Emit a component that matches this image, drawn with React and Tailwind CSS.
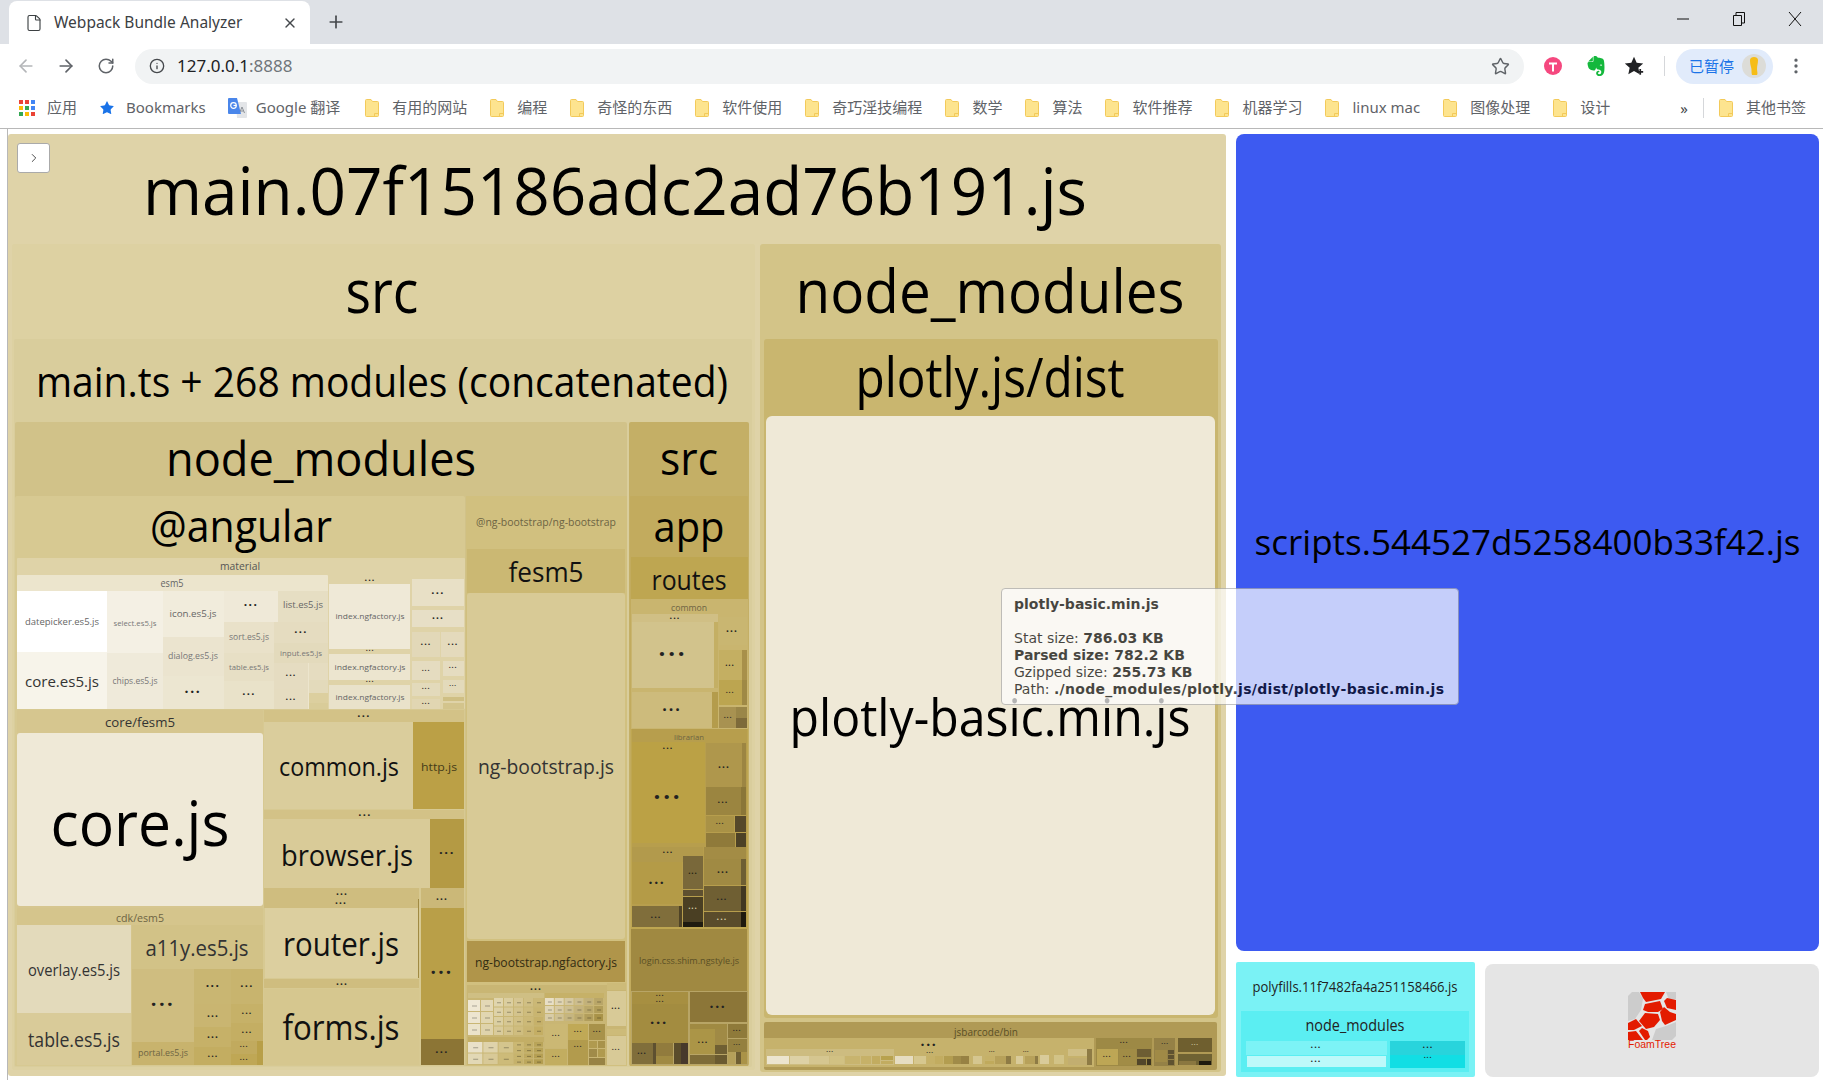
import { ArrowLeft, ArrowRight, RotateCw, Info, Star, Plus, X, File, EllipsisVertical, ChevronRight } from "lucide-react";
import { SiEvernote } from "react-icons/si";

// treemap cells in page pixels: x0, y0, x1, y1, fill, radius
const mainCells = [
  [8, 134, 1226, 1076, "#dfd3a8", 3],
  [12, 244, 755, 1070, "#ddd1a2", 2],
  [14, 339, 752, 1067, "#d9cd9c", 2],
  [15, 422, 627, 1066, "#d1c289", 2],
  [15, 496, 465, 1066, "#d7c992", 2],
  [629, 422, 749, 1066, "#c4af66", 2],
  [630, 496, 748, 1066, "#c2ab5e", 1],
  [631, 557, 748, 929, "#bea651", 0],
  [760, 244, 1221, 1072, "#d3c488", 3],
  [764, 339, 1218, 1018, "#c9b66f", 3],
  [766, 416, 1215, 1015, "#efe9d7", 6],

  // @angular/material
  [17, 558, 465, 709, "#dfd3a8", 1],
  [17, 575, 328, 709, "#ece5cd", 1],
  [17, 591, 107, 652, "#ffffff", 0],
  [17, 652, 107, 709, "#f7f4ea", 0],
  [107, 591, 163, 653, "#f4f0e4", 0],
  [107, 653, 163, 709, "#efeada", 0],
  [163, 591, 224, 637, "#f1ecdc", 0],
  [163, 637, 224, 676, "#ebe4cf", 0],
  [163, 676, 224, 709, "#ece6d1", 0],
  [224, 591, 278, 622, "#efe9d8", 0],
  [278, 591, 328, 622, "#e6dec3", 0],
  [224, 622, 274, 653, "#e9e1c9", 0],
  [224, 653, 274, 681, "#e7dfc5", 0],
  [224, 681, 274, 709, "#e9e2c9", 0],
  [274, 622, 328, 643, "#e5dcc0", 0],
  [274, 643, 328, 663, "#e3dabc", 0],
  [274, 663, 308, 689, "#e5dcc1", 0],
  [274, 689, 308, 709, "#e5dcc0", 0],
  [309, 663, 328, 680, "#e5dcc0", 0],
  [309, 680, 328, 693, "#e3dabb", 0],
  [309, 693, 328, 703, "#dccf9f", 0],
  [309, 703, 328, 709, "#d9cc99", 0],
  [329, 584, 410, 649, "#efe9d7", 0],
  [329, 654, 410, 680, "#ece5cf", 0],
  [329, 685, 410, 709, "#e9e2ca", 0],
  [412, 579, 464, 606, "#e8e0c6", 0],
  [412, 610, 464, 627, "#e7dfc6", 0],
  [412, 632, 440, 657, "#e2d8b8", 0],
  [441, 632, 464, 657, "#e4dabc", 0],
  [412, 661, 440, 680, "#e5dcc0", 0],
  [443, 661, 464, 676, "#e5dcc0", 0],
  [412, 683, 440, 696, "#e3dabb", 0],
  [443, 680, 464, 693, "#e3dabb", 0],
  [412, 699, 440, 709, "#e1d6b2", 0],
  [443, 697, 464, 701, "#cfbf84", 0],
  [443, 703, 464, 709, "#d3c48c", 0],

  // @angular/core and cdk
  [17, 710, 263, 908, "#d6c68f", 1],
  [17, 733, 263, 906, "#efe9d7", 3],
  [17, 908, 263, 1065, "#d5c58c", 1],
  [17, 925, 131, 1013, "#e3dabb", 0],
  [17, 1013, 131, 1065, "#d9cb99", 0],
  [132, 925, 263, 969, "#d2c287", 0],
  [132, 969, 194, 1042, "#cfbd80", 0],
  [132, 1042, 194, 1065, "#c8b36d", 0],
  [194, 969, 231, 1004, "#c9b672", 0],
  [194, 1004, 231, 1027, "#c9b571", 0],
  [194, 1027, 231, 1047, "#c6b168", 0],
  [194, 1047, 231, 1065, "#c3ad61", 0],
  [231, 969, 263, 1004, "#c8b46e", 0],
  [231, 1004, 263, 1023, "#c6b168", 0],
  [231, 1023, 263, 1041, "#c4ae63", 0],
  [231, 1041, 257, 1054, "#c1aa5e", 0],
  [231, 1054, 257, 1065, "#bfa755", 0],
  [257, 1041, 263, 1065, "#b89f48", 0],

  // common, browser, router, forms
  [264, 710, 464, 722, "#d3c287", 0],
  [264, 722, 413, 809, "#dacd9c", 0],
  [413, 722, 464, 809, "#bba046", 0],
  [264, 810, 464, 819, "#d3c287", 0],
  [264, 819, 430, 888, "#d9cb98", 0],
  [430, 819, 464, 888, "#b49a44", 0],
  [264, 888, 419, 908, "#cfbd7f", 0],
  [265, 908, 418, 978, "#dccf9f", 0],
  [418, 899, 419, 978, "#a08a43", 0],
  [264, 979, 419, 988, "#cfbd7f", 0],
  [264, 989, 419, 1065, "#d6c78f", 0],
  [421, 888, 464, 908, "#cbb878", 0],
  [421, 908, 464, 1039, "#b99f48", 0],
  [421, 1039, 464, 1065, "#8c7535", 0],

  // ng-bootstrap
  [466, 496, 627, 1066, "#d1c07f", 0],
  [467, 549, 625, 593, "#cbb873", 0],
  [467, 593, 625, 939, "#d8ca96", 3],
  [467, 941, 625, 982, "#b0954a", 0],
  [467, 985, 626, 1065, "#c9b674", 0],
  [468, 993, 544, 998, "#cfbf84", 0],
  [545, 993, 604, 998, "#c6b168", 0],
  [468, 1037, 544, 1042, "#c3ae66", 0],
  [545, 1024, 567, 1048, "#cbb874", 0],
  [545, 1049, 567, 1065, "#c2ad60", 0],
  [568, 1024, 588, 1040, "#c0a956", 0],
  [568, 1040, 588, 1055, "#b29b4d", 0],
  [568, 1055, 588, 1065, "#b29b4d", 0],
  [589, 1024, 605, 1040, "#a8924a", 0],
  [589, 1041, 597, 1048, "#b09a4f", 0],
  [598, 1041, 605, 1048, "#a8924a", 0],
  [589, 1049, 597, 1057, "#a08b49", 0],
  [598, 1049, 605, 1057, "#b09a4f", 0],
  [589, 1058, 605, 1065, "#988344", 0],
  [607, 983, 626, 990, "#cdbb79", 0],
  [607, 991, 626, 1026, "#d8ca97", 0],
  [607, 1029, 626, 1035, "#cdbb79", 0],
  [607, 1036, 626, 1065, "#d8ca97", 0],

  // app/routes
  [631, 599, 748, 729, "#c9b56f", 0],
  [632, 614, 718, 622, "#d0bf85", 0],
  [632, 622, 714, 688, "#d2c38c", 0],
  [714, 622, 718, 688, "#c4af64", 0],
  [632, 692, 712, 728, "#cdbb7c", 0],
  [712, 692, 718, 728, "#b49c4c", 0],
  [719, 617, 747, 645, "#c9b671", 0],
  [719, 650, 742, 680, "#c4af62", 0],
  [742, 650, 747, 680, "#a8904a", 0],
  [719, 680, 742, 705, "#bca550", 0],
  [742, 680, 747, 705, "#9f8945", 0],
  [719, 707, 736, 728, "#a89251", 0],
  [736, 707, 747, 718, "#9a8648", 0],
  [736, 718, 747, 728, "#7d6a3a", 0],
  [632, 729, 747, 927, "#b79e4d", 0],
  [632, 742, 705, 843, "#bba145", 0],
  [706, 743, 742, 787, "#af974c", 0],
  [742, 743, 746, 787, "#9c8542", 0],
  [706, 787, 741, 815, "#9b8540", 0],
  [741, 787, 746, 815, "#8a7638", 0],
  [706, 816, 734, 832, "#a99246", 0],
  [735, 816, 746, 832, "#55482a", 0],
  [706, 833, 735, 847, "#8f7a3a", 0],
  [736, 833, 746, 847, "#4c4126", 0],
  [632, 847, 703, 862, "#b29a4c", 0],
  [632, 862, 682, 904, "#b49b47", 0],
  [632, 906, 679, 927, "#806e3b", 0],
  [679, 906, 682, 927, "#4f4326", 0],
  [683, 856, 703, 889, "#79683a", 0],
  [683, 890, 703, 896, "#5e5030", 0],
  [683, 897, 703, 922, "#4a3f23", 0],
  [683, 922, 703, 927, "#1f1b10", 0],
  [704, 847, 746, 859, "#a38c45", 0],
  [704, 859, 741, 885, "#a08a43", 0],
  [741, 859, 746, 885, "#6e5e33", 0],
  [704, 886, 741, 911, "#6f5f33", 0],
  [741, 886, 746, 911, "#413722", 0],
  [704, 912, 741, 927, "#5a4c2b", 0],
  [741, 912, 746, 927, "#1f1a0e", 0],
  [631, 929, 747, 991, "#a08941", 0],
  [631, 991, 748, 1065, "#b8a566", 0],
  [632, 992, 688, 1004, "#a78f41", 0],
  [632, 1004, 688, 1043, "#a38c40", 0],
  [632, 1043, 653, 1064, "#806e3b", 0],
  [653, 1043, 656, 1064, "#5e5030", 0],
  [656, 1043, 673, 1056, "#917b3d", 0],
  [656, 1056, 673, 1064, "#a08a42", 0],
  [674, 1043, 681, 1064, "#5a4c2b", 0],
  [681, 1043, 688, 1064, "#47392b", 0],
  [690, 992, 747, 1022, "#8c7638", 0],
  [690, 1024, 727, 1029, "#a08a42", 0],
  [690, 1029, 715, 1054, "#ab9547", 0],
  [690, 1055, 715, 1064, "#7e6c38", 0],
  [715, 1029, 727, 1045, "#a08a45", 0],
  [715, 1045, 727, 1054, "#6f5f33", 0],
  [715, 1055, 727, 1064, "#6a5a30", 0],
  [728, 1024, 747, 1038, "#8f7a3a", 0],
  [728, 1039, 747, 1052, "#94803f", 0],
  [728, 1052, 735, 1064, "#b5a05a", 0],
  [736, 1052, 741, 1064, "#6f5f33", 0],
  [741, 1052, 747, 1064, "#aa9348", 0],

  // jsbarcode
  [764, 1022, 1217, 1070, "#b09a55", 2],
  [764, 1038, 1094, 1067, "#c6b26c", 0],
  [766, 1049, 894, 1065, "#cdbc80", 0],
  [767, 1056, 789, 1064, "#ece5cf", 0],
  [790, 1056, 809, 1064, "#ddd1a6", 0],
  [809, 1056, 829, 1064, "#d5c690", 0],
  [830, 1056, 844, 1064, "#d1c183", 0],
  [845, 1056, 860, 1064, "#c8b46e", 0],
  [861, 1056, 871, 1064, "#c6b168", 0],
  [872, 1056, 880, 1064, "#c2ac60", 0],
  [881, 1056, 893, 1060, "#b8a24e", 0],
  [881, 1061, 893, 1064, "#c2ac60", 0],
  [895, 1056, 913, 1064, "#e6ddc2", 0],
  [914, 1056, 926, 1064, "#d6c78f", 0],
  [927, 1056, 935, 1064, "#c6b168", 0],
  [935, 1056, 943, 1064, "#c2ac60", 0],
  [944, 1056, 953, 1064, "#b39d50", 0],
  [953, 1056, 961, 1064, "#a08b49", 0],
  [961, 1056, 969, 1064, "#978143", 0],
  [973, 1056, 982, 1064, "#d5c690", 0],
  [985, 1056, 994, 1060, "#c6b168", 0],
  [985, 1061, 994, 1064, "#c0aa5c", 0],
  [995, 1056, 1006, 1064, "#b7a15a", 0],
  [1006, 1056, 1011, 1064, "#8e7b45", 0],
  [1016, 1056, 1023, 1064, "#d9cb9a", 0],
  [1025, 1056, 1035, 1064, "#b7a15a", 0],
  [1035, 1056, 1038, 1064, "#8e7b45", 0],
  [1040, 1055, 1049, 1064, "#d9cb9a", 0],
  [1054, 1055, 1064, 1064, "#d2c387", 0],
  [1068, 1049, 1087, 1056, "#d0bf85", 0],
  [1068, 1058, 1087, 1065, "#c2ae70", 0],
  [1087, 1049, 1092, 1065, "#8e7b45", 0],
  [1096, 1038, 1152, 1066, "#9d8945", 0],
  [1097, 1049, 1118, 1065, "#bda655", 0],
  [1119, 1049, 1136, 1065, "#a18c46", 0],
  [1137, 1049, 1151, 1057, "#6d5d33", 0],
  [1137, 1059, 1146, 1065, "#52462a", 0],
  [1147, 1059, 1151, 1065, "#3d3420", 0],
  [1154, 1038, 1175, 1066, "#958146", 0],
  [1155, 1050, 1167, 1062, "#a08a46", 0],
  [1168, 1050, 1174, 1054, "#5f5230", 0],
  [1168, 1055, 1174, 1059, "#5f5230", 0],
  [1168, 1060, 1174, 1065, "#5f5230", 0],
  [1178, 1038, 1212, 1052, "#6f5f2f", 0],
  [1178, 1054, 1212, 1065, "#6f6233", 0],
  [1179, 1061, 1196, 1065, "#8a7740", 0],
  [1199, 1061, 1211, 1065, "#1f1a0e", 0],
];

const mix = (a, b, t) => {
  const ch = (hex, i) => parseInt(hex.slice(1 + i * 2, 3 + i * 2), 16);
  const out = [0, 1, 2].map((i) => Math.round(ch(a, i) + (ch(b, i) - ch(a, i)) * t));
  return `rgb(${out.join(",")})`;
};

// small undetailed tiles that fill the dense corners, each with a faint dash
const tiles = (x0, y0, x1, y1, cols, rows, from, to) => {
  const out = [];
  const w = (x1 - x0) / cols;
  const h = (y1 - y0) / rows;
  for (let r = 0; r < rows; r++) {
    for (let c = 0; c < cols; c++) {
      const t = (c / Math.max(cols - 1, 1)) * 0.75 + (r / Math.max(rows - 1, 1)) * 0.25;
      const cx = x0 + (c + 0.5) * w;
      const cy = y0 + (r + 0.5) * h;
      const dash = Math.min(w * 0.4, 5);
      out.push([x0 + c * w, y0 + r * h, x0 + (c + 1) * w - 1, y0 + (r + 1) * h - 1, mix(from, to, t), 0]);
      out.push([cx - dash / 2, cy - 0.5, cx + dash / 2, cy + 0.5, "rgba(0,0,0,0.3)", 0]);
    }
  }
  return out;
};

const denseCells = [
  ...tiles(468, 1000, 494, 1036, 2, 3, "#efe8d4", "#dfd3ab"),
  ...tiles(494, 998, 544, 1036, 5, 4, "#e0d5ad", "#c4ae64"),
  ...tiles(545, 998, 604, 1022, 6, 3, "#e8dfc6", "#a99349"),
  ...tiles(468, 1042, 514, 1065, 3, 2, "#e9e1c9", "#cdbb79"),
  ...tiles(514, 1042, 544, 1065, 3, 4, "#cbb873", "#b39d50"),
];

// cx, cy, text, font size, width, colour
const mainLabels = [
  [615, 192, "main.07f15186adc2ad76b191.js", 66, 944],
  [382, 292, "src", 60, 73],
  [990, 292, "node_modules", 60, 389],
  [382, 382, "main.ts + 268 modules (concatenated)", 42, 692],
  [321, 459, "node_modules", 48, 310],
  [689, 459, "src", 46, 58],
  [241, 527, "@angular", 43, 182],
  [689, 527, "app", 42, 71],
  [546, 522, "@ng-bootstrap/ng-bootstrap", 10, 140, "#6d6443"],
  [546, 572, "fesm5", 28, 75, "#111"],
  [689, 581, "routes", 27, 75, "#111"],
  [990, 378, "plotly.js/dist", 54, 269],
  [990, 718, "plotly-basic.min.js", 51, 401],
  [240, 566, "material", 10, 40, "#555"],
  [172, 583, "esm5", 10, 23, "#666"],
  [62, 622, "datepicker.es5.js", 9.5, 74, "#666"],
  [62, 682, "core.es5.js", 15, 74, "#333"],
  [135, 623, "select.es5.js", 7.5, 43, "#777"],
  [135, 681, "chips.es5.js", 8.5, 45, "#777"],
  [193, 614, "icon.es5.js", 9.5, 47, "#666"],
  [193, 656, "dialog.es5.js", 8.5, 50, "#777"],
  [303, 605, "list.es5.js", 9.5, 40, "#666"],
  [249, 637, "sort.es5.js", 9, 40, "#777"],
  [249, 667, "table.es5.js", 8, 40, "#777"],
  [301, 653, "input.es5.js", 8, 42, "#777"],
  [370, 616, "index.ngfactory.js", 8, 69, "#666"],
  [370, 667, "index.ngfactory.js", 8, 71, "#666"],
  [370, 697, "index.ngfactory.js", 8, 69, "#666"],
  [140, 722, "core/fesm5", 13, 70, "#333"],
  [140, 824, "core.js", 63, 179],
  [140, 918, "cdk/esm5", 10, 48, "#6d6443"],
  [74, 970, "overlay.es5.js", 16, 92, "#333"],
  [74, 1040, "table.es5.js", 20, 92, "#333"],
  [197, 948, "a11y.es5.js", 22, 103, "#333"],
  [163, 1053, "portal.es5.js", 8.5, 50, "#6d6443"],
  [339, 767, "common.js", 25, 120, "#111"],
  [439, 767, "http.js", 11, 36, "#443b18"],
  [347, 855, "browser.js", 30, 132, "#111"],
  [341, 945, "router.js", 32, 116, "#111"],
  [341, 1028, "forms.js", 34, 117, "#111"],
  [546, 767, "ng-bootstrap.js", 20, 136, "#333"],
  [546, 962, "ng-bootstrap.ngfactory.js", 13, 142, "#332c12"],
  [689, 608, "common", 9.5, 36, "#6d6443"],
  [689, 737, "librarian", 7.5, 30, "#6d6443"],
  [689, 961, "login.css.shim.ngstyle.js", 9, 100, "#5a4f25"],
  [986, 1032, "jsbarcode/bin", 10, 64, "#5a4f25"],
];

// cx, cy, font size, colour
const dots = [
  [251, 605, 12], [193, 692, 14], [249, 694, 11], [301, 632, 11], [291, 675, 9], [291, 699, 9],
  [370, 580, 9], [370, 651, 7], [370, 682, 7], [438, 593, 11], [438, 618, 10], [426, 644, 9],
  [453, 644, 9], [426, 671, 7], [453, 668, 7], [426, 689, 7], [453, 686, 6], [426, 704, 7],
  [364, 716, 11], [365, 815, 11], [447, 853, 13], [342, 894, 10], [341, 903, 10], [442, 899, 10],
  [442, 973, 19], [442, 1052, 11], [342, 984, 10],
  [163, 1005, 20], [213, 986, 12], [247, 986, 11], [213, 1016, 10], [247, 1013, 9], [213, 1037, 10],
  [247, 1032, 9], [213, 1056, 9], [244, 1047, 7], [244, 1060, 7],
  [536, 989, 10], [616, 1009, 8], [616, 1050, 7], [556, 1036, 7], [578, 1032, 7], [597, 1032, 7],
  [556, 1057, 7], [578, 1047, 7],
  [673, 655, 24], [672, 710, 16], [675, 618, 9], [732, 631, 10], [730, 666, 8], [730, 693, 7], [728, 718, 7],
  [668, 798, 24], [668, 748, 9], [724, 767, 10], [723, 802, 9], [720, 824, 7], [668, 852, 9],
  [657, 883, 14], [656, 917, 9], [693, 874, 8, "#211c0e"], [693, 909, 8, "#d8cfa8"],
  [723, 872, 10], [722, 899, 9], [722, 919, 9, "#d8cfa8"],
  [660, 996, 7], [660, 1002, 7], [659, 1023, 15], [642, 1054, 8], [718, 1007, 14], [703, 1042, 9],
  [737, 1031, 7], [737, 1045, 6],
  [929, 1045, 14], [830, 1052, 6], [930, 1053, 6], [992, 1052, 5], [1026, 1052, 5],
  [1124, 1043, 7], [1165, 1044, 6], [1107, 1057, 7], [1127, 1057, 7], [1195, 1045, 6, "#d8cfa8"],
];

const polyCells = [
  [1236, 962, 1475, 1077, "#7af2f5", 2],
  [1241, 1011, 1469, 1072, "#5beef2", 0],
  [1246, 1041, 1387, 1055, "#7cf3f6", 0],
  [1247, 1056, 1386, 1067, "#bdf9fa", 0],
  [1390, 1041, 1465, 1055, "#28d4dc", 0],
  [1390, 1055, 1465, 1068, "#12dee4", 0],
];
const polyLabels = [
  [1355, 987, "polyfills.11f7482fa4a251158466.js", 15, 205, "#222"],
  [1355, 1026, "node_modules", 15.5, 99, "#222"],
];
const polyDots = [
  [1316, 1047, 9], [1316, 1061, 9], [1428, 1047, 9], [1428, 1058, 7],
];

const Tree = ({ box, cells, labels = [], marks = [], className }) => (
  <svg
    viewBox={box.join(" ")}
    width={box[2]}
    height={box[3]}
    className={`block shrink-0 font-['Open_Sans',sans-serif] ${className || ""}`}
  >
    {cells.map(([x0, y0, x1, y1, fill, rx], i) => (
      <rect key={i} x={x0} y={y0} width={x1 - x0} height={y1 - y0} fill={fill} rx={rx} />
    ))}
    {labels.map(([cx, cy, text, size, width, color], i) => (
      <text
        key={i}
        x={cx}
        y={cy + size * 0.35}
        fontSize={size}
        fill={color || "#000"}
        textAnchor="middle"
        textLength={width}
        lengthAdjust="spacingAndGlyphs"
      >
        {text}
      </text>
    ))}
    {marks.map(([cx, cy, size, color], i) => (
      <text
        key={i}
        x={cx}
        y={cy + size * 0.06}
        fontSize={size}
        fontWeight="700"
        letterSpacing={size * 0.12}
        fill={color || "#222"}
        textAnchor="middle"
      >
        ...
      </text>
    ))}
  </svg>
);

const Folder = () => (
  <svg width="14" height="18" viewBox="0 0 14 18" className="shrink-0">
    <path d="M1.5 .5h4.5l1.5 2h5a1 1 0 0 1 1 1v13a1 1 0 0 1-1 1h-11a1 1 0 0 1-1-1v-15a1 1 0 0 1 1-1z" fill="#fde48f" stroke="#f3ca5a" />
    <path d="M9.5 17.5v-3h4" fill="none" stroke="#f3ca5a" />
  </svg>
);

const AppsIcon = () => {
  const colors = ["#ea4335", "#ea4335", "#4285f4", "#fbbc04", "#34a853", "#4285f4", "#34a853", "#fbbc04", "#ea4335"];
  return (
    <div className="grid grid-cols-3 gap-[2px] w-[16px] h-[16px] shrink-0">
      {colors.map((c, i) => (
        <svg key={i} width="4" height="4">
          <rect width="4" height="4" fill={c} />
        </svg>
      ))}
    </div>
  );
};

const TranslateIcon = () => (
  <svg width="19" height="20" viewBox="0 0 19 20" className="shrink-0">
    <path d="M8 4h10a1 1 0 0 1 1 1v14a1 1 0 0 1-1 1H9z" fill="#e3e5e8" />
    <path d="M11.5 15l2.5-6 2.5 6M12.5 13h3" fill="none" stroke="#8a8f96" strokeWidth="1" />
    <path d="M1 0h8l4 16H1a1 1 0 0 1-1-1V1a1 1 0 0 1 1-1z" fill="#4a86ea" />
    <circle cx="5.5" cy="7.5" r="2.8" fill="none" stroke="#fff" strokeWidth="1.2" />
    <path d="M5.5 7.5h2.8" stroke="#fff" strokeWidth="1.2" />
  </svg>
);

const FoamLogo = () => (
  <svg width="48" height="58" viewBox="0 0 48 58" className="font-['Liberation_Sans',sans-serif]">
    <g fill="#cccccc">
      <path d="M0 4l4-4h7l4 7-2 11-6 9-7 2z" />
      <path d="M38 0h10v7l-7 1z" />
      <path d="M28 37l10-3 10-4v14l-4 4H24z" />
    </g>
    <g fill="#e31b00">
      <path d="M12 0h25l-4 7-15 3-3-4z" />
      <path d="M17 12l15-3 3 8-5 3H20l-5-2z" />
      <path d="M36 9l3-3 9 2v10l-9-2z" />
      <path d="M11 29l6-8 13 1 2 6-6 7-8 2z" />
      <path d="M32 20l4-5 6 5 6 2v6l-11 5-3-4z" />
      <path d="M0 31l8-4 6 7-8 4H0z" />
      <path d="M0 40l8-1 7 9H0z" />
      <path d="M14 36l6 3 2 6-3 3h-2l-6-9z" />
    </g>
    <text x="24" y="56" fontSize="10" fill="#e31b00" textAnchor="middle" textLength="48" lengthAdjust="spacingAndGlyphs">
      FoamTree
    </text>
  </svg>
);

const bookmarks = [
  "有用的网站", "编程", "奇怪的东西", "软件使用", "奇巧淫技编程", "数学", "算法",
  "软件推荐", "机器学习", "linux mac", "图像处理", "设计",
];

const Bookmark = ({ label }) => (
  <div className="flex items-center gap-[13px] shrink-0">
    <Folder />
    <span className="relative -top-px">{label}</span>
  </div>
);

export default function App() {
  return (
    <div className="relative w-full h-screen overflow-hidden bg-white flex flex-col font-['Noto_Sans','Noto_Sans_CJK_SC',sans-serif]">
      {/* tab strip */}
      <div className="h-[44px] shrink-0 bg-[#dee1e6] flex items-end pl-[9px]">
        <div className="w-[301px] h-[43px] bg-white rounded-t-[8px] flex items-center pl-[16px] pr-[12px] text-[#3c4043]">
          <File size={18} strokeWidth={1.5} className="shrink-0" />
          <span className="ml-[11px] text-[15.5px] whitespace-nowrap">Webpack Bundle Analyzer</span>
          <X size={16} strokeWidth={2} className="ml-auto text-[#45484c]" />
        </div>
        <Plus size={20} strokeWidth={2} className="ml-[16px] mb-[12px] text-[#45484c]" />
        <div className="ml-auto self-start flex items-center h-[38px] text-[#111]">
          <div className="w-[56px] flex justify-center">
            <svg width="12" height="12"><path d="M0 6h12" stroke="#111" /></svg>
          </div>
          <div className="w-[56px] flex justify-center">
            <svg width="12" height="14" fill="none" stroke="#111">
              <path d="M.5 3.5h8v10h-8zM3 3V.5h8.5V11H9" />
            </svg>
          </div>
          <div className="w-[56px] flex justify-center">
            <svg width="14" height="14" stroke="#111"><path d="M1 0l12 14M13 0L1 14" /></svg>
          </div>
        </div>
      </div>

      {/* toolbar */}
      <div className="h-[44px] shrink-0 flex items-center pl-[6px]">
        <div className="w-[40px] flex justify-center">
          <ArrowLeft size={20} className="text-[#b4b6b9]" />
        </div>
        <div className="w-[40px] flex justify-center">
          <ArrowRight size={20} className="text-[#5f6368]" />
        </div>
        <div className="w-[40px] flex justify-center">
          <RotateCw size={18} className="text-[#5f6368]" />
        </div>
        <div className="ml-[9px] w-[1389px] h-[35px] rounded-full bg-[#f1f3f4] flex items-center pl-[14px] pr-[14px]">
          <Info size={16} className="text-[#45484c]" />
          <span className="ml-[12px] text-[17px] text-[#202124]">
            127.0.0.1<span className="text-[#70757a]">:8888</span>
          </span>
          <Star size={19} strokeWidth={1.8} className="ml-auto text-[#5f6368]" />
        </div>
        <svg width="18" height="18" viewBox="0 0 18 18" className="ml-[20px] shrink-0">
          <circle cx="9" cy="9" r="9" fill="#f5487f" />
          <path d="M5 5.5h8v2h-3v7H8v-7H5z" fill="#fff" />
        </svg>
        <SiEvernote size={20} className="ml-[24px] shrink-0 text-[#14b83c]" />
        <svg width="20" height="20" viewBox="0 0 24 24" className="ml-[18px] shrink-0">
          <path d="M12 1l3.2 7.2 7.8.8-5.8 5.2 1.6 7.6L12 18l-6.800 3.800 1.600-7.600L1 9l7.800-.8z" fill="#202124" />
          <path d="M16 19h7M19.500 15.500v7" stroke="#202124" strokeWidth="2" />
        </svg>
        <div className="ml-[20px] w-px h-[20px] bg-[#d5d7da] shrink-0" />
        <div className="ml-[11px] w-[97px] h-[35px] rounded-full bg-[#e1ebfb] flex items-center pl-[13px] shrink-0">
          <span className="text-[15px] text-[#1a73e8] whitespace-nowrap">已暂停</span>
          <svg width="24" height="26" viewBox="0 0 24 26" className="ml-[8px]">
            <circle cx="12" cy="13" r="12" fill="#dcdcd8" />
            <path d="M8 7c0-4 8-4 8 0 0 4-1 5-1 9 0 2 1 5 0 6h-5c-1-3 0-5-1-8-.5-2-1-4-1-7z" fill="#f6bd16" />
          </svg>
        </div>
        <EllipsisVertical size={20} className="ml-[13px] text-[#5f6368]" />
      </div>

      {/* bookmarks */}
      <div className="h-[41px] shrink-0 border-b border-[#b8b8b8] flex items-center pl-[19px] text-[15px] text-[#5f6368] whitespace-nowrap">
        <AppsIcon />
        <span className="ml-[12px] relative -top-px">应用</span>
        <Star size={16} fill="#1a73e8" strokeWidth={0} className="ml-[22px] shrink-0" />
        <span className="ml-[11px] relative -top-px">Bookmarks</span>
        <div className="ml-[22px]"><TranslateIcon /></div>
        <span className="ml-[9px] relative -top-px">Google 翻译</span>
        <div className="ml-[25px] flex items-center gap-[23px]">
          {bookmarks.map((b) => (
            <Bookmark key={b} label={b} />
          ))}
        </div>
        <span className="ml-auto text-[#45484c]">»</span>
        <div className="ml-[15px] w-px h-[20px] bg-[#d5d7da]" />
        <div className="ml-[15px] mr-[17px]"><Bookmark label="其他书签" /></div>
      </div>

      {/* bundle treemap */}
      <div className="flex flex-1 min-h-0 ml-[7px] border-l border-[#b8b8b8] pt-[5px]">
        <Tree
          box={[8, 134, 1218, 946]}
          cells={[...mainCells, ...denseCells]}
          labels={mainLabels}
          marks={dots}
        />
        <div className="ml-[10px] w-[583px] shrink-0 flex flex-col font-['Open_Sans',sans-serif]">
          <div className="h-[817px] rounded-[8px] bg-[#3d5af1] flex items-center justify-center text-[35px] text-black whitespace-nowrap">
            scripts.544527d5258400b33f42.js
          </div>
          <div className="mt-[11px] flex">
            <Tree
              box={[1236, 962, 239, 115]}
              cells={polyCells}
              labels={polyLabels}
              marks={polyDots}
            />
            <div className="ml-[10px] mt-[2px] w-[334px] h-[113px] rounded-[8px] bg-[#e5e5e5] flex items-center justify-center">
              <FoamLogo />
            </div>
          </div>
        </div>
      </div>

      {/* sidebar toggle */}
      <button className="absolute left-[17px] top-[143px] w-[33px] h-[30px] bg-white border border-[#aaa] rounded-[3px] flex items-center justify-center">
        <ChevronRight size={14} strokeWidth={1.5} className="text-[#333]" />
      </button>

      {/* hover tooltip */}
      <div className="absolute left-[1001px] top-[588px] w-[458px] h-[117px] px-[12px] pt-[7px] bg-white opacity-70 border border-[#aaa] rounded-[4px] text-black text-[14px] leading-[17px] font-['DejaVu_Sans',sans-serif] whitespace-nowrap">
        <div className="font-bold">plotly-basic.min.js</div>
        <div className="h-[17px]" />
        <div>Stat size: <b>786.03 KB</b></div>
        <div className="font-bold">Parsed size: 782.2 KB</div>
        <div>Gzipped size: <b>255.73 KB</b></div>
        <div>Path: <b className="tracking-[0.3px]">./node_modules/plotly.js/dist/plotly-basic.min.js</b></div>
      </div>
    </div>
  );
}
